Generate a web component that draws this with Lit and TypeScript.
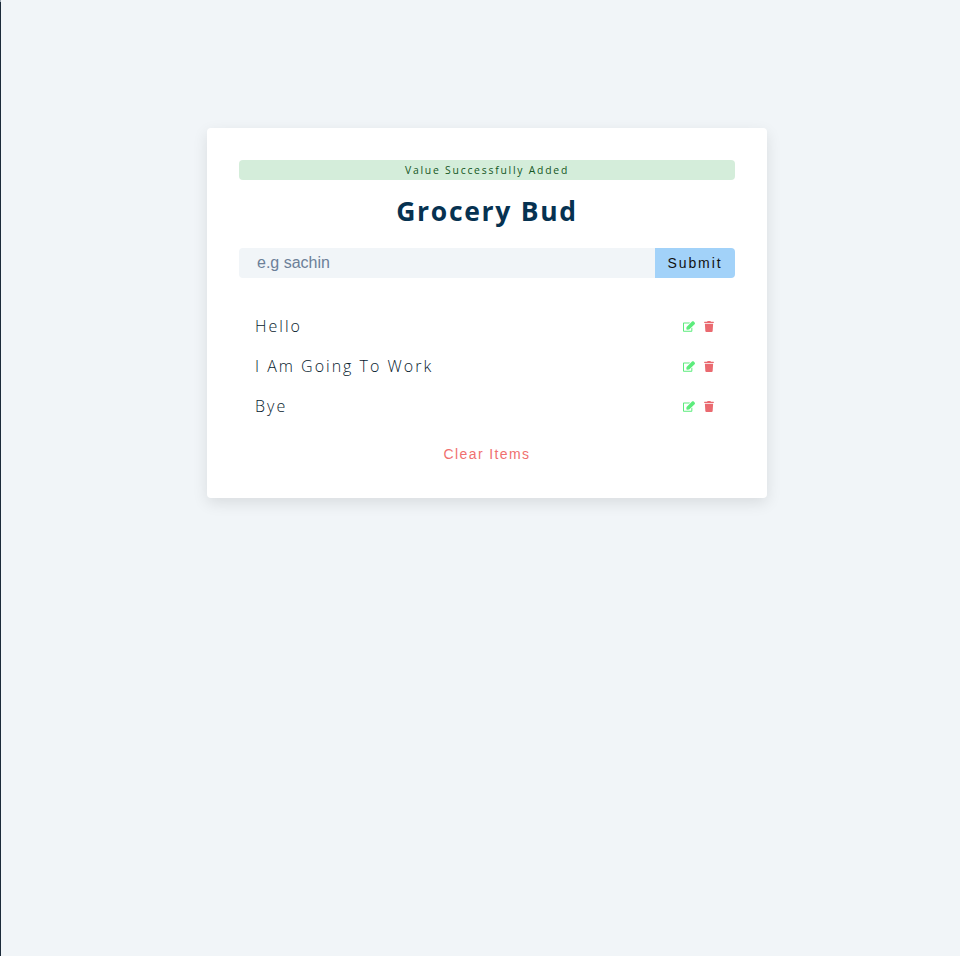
import { LitElement, html, css } from "lit";
import { customElement } from "lit/decorators.js";

@customElement("app-root")
export class AppRoot extends LitElement {
  static styles = css`
    :host { display: flex; min-height: 956px; background: #f1f5f8; font-family: "Open Sans", "Noto Sans", sans-serif; color: #102a42; }
    .rail { width: 1px; background: linear-gradient(#9aa5b0 2px, #1c2b3a 2px); flex: none; }
    main { flex: 1; padding: 128px 0 0 206px; }
    .card { width: 560px; box-sizing: border-box; padding: 32px; background: #fff; border-radius: 4px; box-shadow: 0 5px 15px rgba(0,0,0,.1); }
    .alert { height: 20px; line-height: 20px; margin: 0 0 16px; text-align: center; font-size: 10.4px; letter-spacing: 1.76px; background: #d4edda; color: #155724; border-radius: 4px; }
    h3 { margin: 0 0 21px; text-align: center; font-size: 26.5px; line-height: 31px; font-weight: 700; letter-spacing: 1.7px; color: #063251; }
    form { display: flex; height: 30px; margin: 0 0 28px; }
    input { flex: 1; min-width: 0; box-sizing: border-box; border: 0; padding: 0 0 0 18px; background: #f1f5f8; border-radius: 4px 0 0 4px; font: 16px "Liberation Sans", Arial, sans-serif; outline: none; }
    input::placeholder { color: #6c8098; opacity: 1; }
    button { font-family: "Liberation Sans", Arial, sans-serif; border: 0; padding: 0; cursor: pointer; }
    .submit { width: 80px; background: #a2d2f9; color: #111; font-size: 14px; letter-spacing: 1.9px; border-radius: 0 4px 4px 0; }
    .list { display: flex; flex-direction: column; }
    .item { height: 40px; display: flex; align-items: center; justify-content: space-between; padding: 0 21px 0 16px; font-size: 16px; letter-spacing: 2px; font-weight: 300; color: #061a2e; }
    .actions { display: flex; gap: 9px; align-items: center; }
    .actions svg { display: block; height: 11px; }
    .clear { display: block; margin: 19px auto 3px; background: none; color: #f0706f; font-size: 14px; letter-spacing: 1.4px; height: 18px; line-height: 18px; }
  `;

  render() {
    const items = ["Hello", "I Am Going To Work", "Bye"];
    return html`
      <div class="rail"></div>
      <main>
        <section class="card">
          <p class="alert">Value Successfully Added</p>
          <h3>Grocery Bud</h3>
          <form @submit=${(e: Event) => e.preventDefault()}>
            <input placeholder="e.g sachin" />
            <button class="submit" type="submit">Submit</button>
          </form>
          <div class="list">
            ${items.map(
              (t) => html`<article class="item">
                <span>${t}</span>
                <span class="actions">
                  <svg viewBox="0 0 576 512" width="12" fill="#5cec7c"><path d="M402.3 344.9l32-32c5-5 13.7-1.5 13.7 5.7V464c0 26.5-21.5 48-48 48H48c-26.5 0-48-21.5-48-48V112c0-26.5 21.5-48 48-48h273.5c7.1 0 10.7 8.6 5.7 13.7l-32 32c-1.5 1.5-3.5 2.3-5.7 2.3H48v352h352V350.5c0-2.1.8-4.1 2.3-5.6zm156.6-201.8L296.3 405.7l-90.4 10c-26.2 2.9-48.5-19.2-45.6-45.6l10-90.4L432.9 17.1c22.9-22.9 59.9-22.9 82.7 0l43.2 43.2c22.9 22.9 22.9 60 .1 82.8z"/></svg>
                  <svg viewBox="0 0 448 512" width="10" fill="#ea6a70"><path d="M432 32H312l-9.4-18.7A24 24 0 0 0 281.1 0H166.8a23.7 23.7 0 0 0-21.4 13.3L136 32H16A16 16 0 0 0 0 48v32a16 16 0 0 0 16 16h416a16 16 0 0 0 16-16V48a16 16 0 0 0-16-16zM53.2 467a48 48 0 0 0 47.9 45h245.8a48 48 0 0 0 47.9-45L416 128H32z"/></svg>
                </span>
              </article>`
            )}
          </div>
          <button class="clear" type="button">Clear Items</button>
        </section>
      </main>
    `;
  }
}
